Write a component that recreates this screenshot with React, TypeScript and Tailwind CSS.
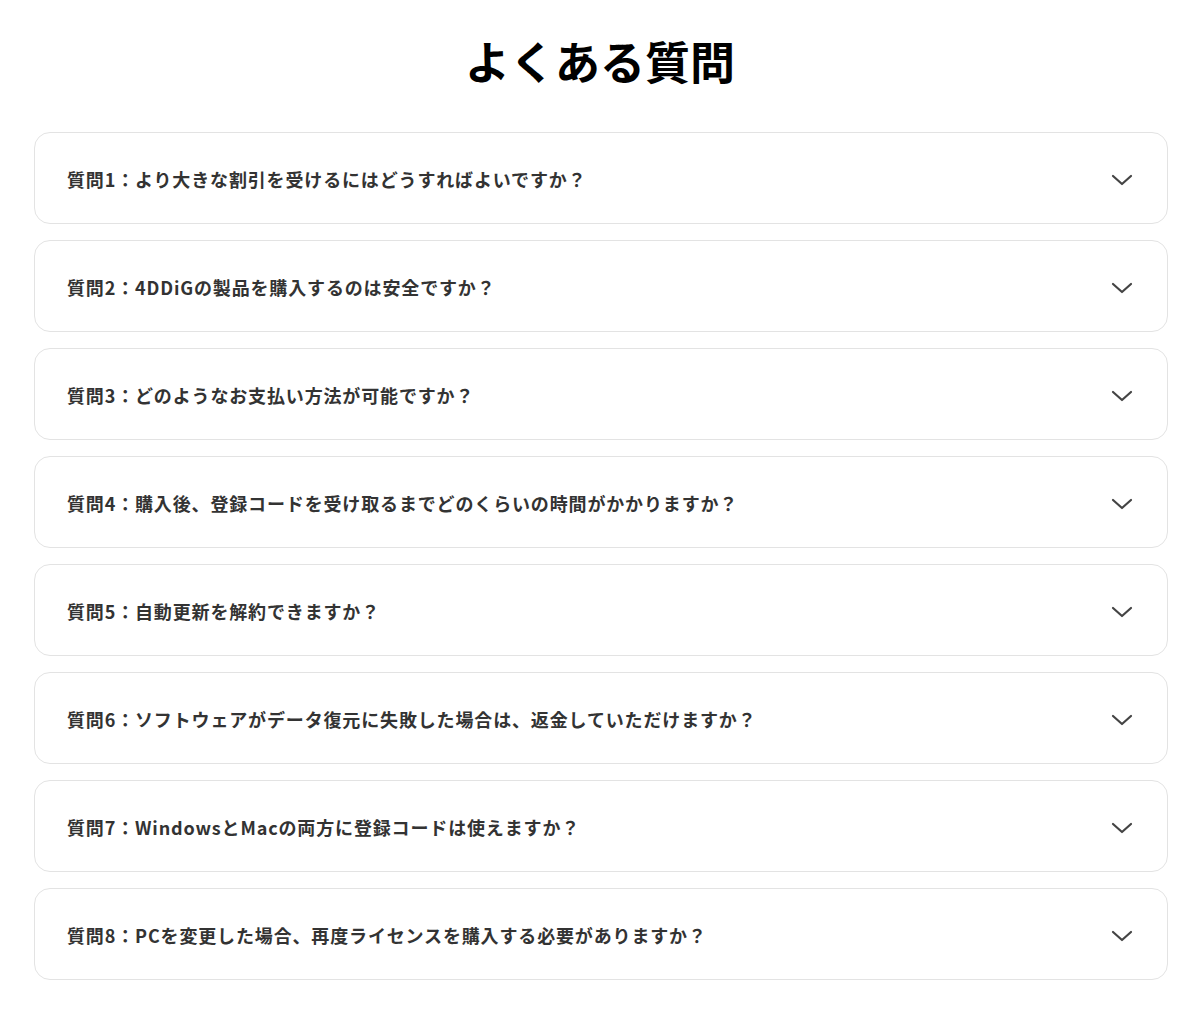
import React from "react";

const questions = [
  "質問1：より大きな割引を受けるにはどうすればよいですか？",
  "質問2：4DDiGの製品を購入するのは安全ですか？",
  "質問3：どのようなお支払い方法が可能ですか？",
  "質問4：購入後、登録コードを受け取るまでどのくらいの時間がかかりますか？",
  "質問5：自動更新を解約できますか？",
  "質問6：ソフトウェアがデータ復元に失敗した場合は、返金していただけますか？",
  "質問7：WindowsとMacの両方に登録コードは使えますか？",
  "質問8：PCを変更した場合、再度ライセンスを購入する必要がありますか？",
];

function Chevron() {
  return (
    <svg width="24" height="24" viewBox="0 0 24 24" fill="none" stroke="#444" strokeWidth="2.2" strokeLinecap="round" strokeLinejoin="round">
      <path d="M3 10l9 8 9-8" />
    </svg>
  );
}

export default function App() {
  return (
    <div
      className="w-[1200px] min-h-[1021px] bg-white pt-[26px]"
      style={{ fontFamily: '"Noto Sans CJK JP", "Noto Sans", sans-serif' }}
    >
      <h1 className="text-center text-[45px] leading-[72px] font-bold text-black mb-[35px] -mt-[1px]">
        よくある質問
      </h1>
      <div className="ml-[34px] w-[1134px] flex flex-col gap-4">
        {questions.map((q) => (
          <div
            key={q}
            className="h-[92px] rounded-2xl border border-[#e3e3e3] flex items-center justify-between pl-8 pr-[33px]"
          >
            <span className="pt-[2px] text-[18px] font-bold text-[#333] tracking-[0.85px]">{q}</span>
            <Chevron />
          </div>
        ))}
      </div>
    </div>
  );
}
